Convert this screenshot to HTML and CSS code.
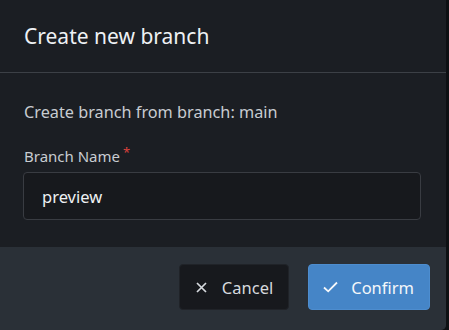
FILE: index.html
```html
<!DOCTYPE html>
<html lang="en">
<head>
    <meta charset="UTF-8">
    <title>Create new branch</title>
    <link rel="stylesheet" href="styles.css">
</head>
<body>
    <div class="dialog">
        <div class="dialog-header">
            <h2>Create new branch</h2>
        </div>
        <div class="dialog-body">
            <p class="source">Create branch from branch: main</p>
            <label class="field-label" for="branch">Branch Name<span class="required">*</span></label>
            <input class="field-input" id="branch" type="text" value="preview">
        </div>
        <div class="dialog-footer">
            <button class="btn btn-cancel">
                <svg class="icon-x" width="11" height="11" viewBox="0 0 11 11"><path d="M1 1 L10 10 M10 1 L1 10" stroke="currentColor" stroke-width="1.7" fill="none"/></svg>
                <span>Cancel</span>
            </button>
            <button class="btn btn-confirm">
                <svg class="icon-check" width="15" height="12" viewBox="0 0 15 12"><path d="M1 6.5 L5.2 10.3 L14 1.5" stroke="currentColor" stroke-width="1.8" fill="none"/></svg>
                <span>Confirm</span>
            </button>
        </div>
    </div>
</body>
</html>
```

FILE: styles.css
```css
body {
    margin: 0;
    background-color: #0e1013;
    font-family: "Noto Sans", "Open Sans", sans-serif;
    color: #e6e9ec;
}
.dialog {
    width: 446px;
    height: 330px;
    background-color: #1b1e23;
    border-bottom-right-radius: 5px;
    display: flex;
    flex-direction: column;
    overflow: hidden;
}
.dialog-header {
    height: 72px;
    display: flex;
    align-items: center;
    padding: 0 24px;
    border-bottom: 1px solid #3c4046;
}
.dialog-header h2 {
    margin: 0;
    font-size: 21px;
    font-weight: 400;
    color: #eef1f4;
}
.dialog-body {
    padding: 27px 24px 27px 23px;
    display: flex;
    flex-direction: column;
}
.source {
    margin: 0 0 0 1px;
    font-size: 16.25px;
    line-height: 24px;
    color: #c8ccd1;
}
.field-label {
    margin: 22px 0 6px 1px;
    font-size: 15px;
    line-height: 20px;
    color: #c8ccd1;
}
.required {
    color: #d9413c;
    font-size: 13px;
    vertical-align: top;
    position: relative;
    top: -4px;
    margin-left: 3px;
}
.field-input {
    box-sizing: border-box;
    width: 398px;
    height: 48px;
    padding: 0 18px;
    background-color: #17191d;
    border: 1px solid #393c42;
    border-radius: 4px;
    font-family: inherit;
    font-size: 16.5px;
    color: #eef1f4;
    outline: none;
}
.dialog-footer {
    flex: 1;
    background-color: #2a3037;
    display: flex;
    justify-content: flex-end;
    align-items: flex-start;
    gap: 19px;
    padding: 17px 16px 0 0;
}
.btn {
    display: flex;
    align-items: center;
    height: 46px;
    border-radius: 4px;
    font-family: inherit;
    font-size: 16.5px;
    cursor: pointer;
}
.btn svg {
    flex-shrink: 0;
}
.btn-cancel {
    gap: 15px;
    background-color: #17191d;
    border: 1px solid #202328;
    color: #d6dade;
    padding: 0 15px 0 16px;
}
.btn-confirm {
    gap: 13px;
    background-color: #4585c7;
    border: 1px solid #4d8dcf;
    color: #f4f7fa;
    padding: 0 15px 0 14px;
}
```
